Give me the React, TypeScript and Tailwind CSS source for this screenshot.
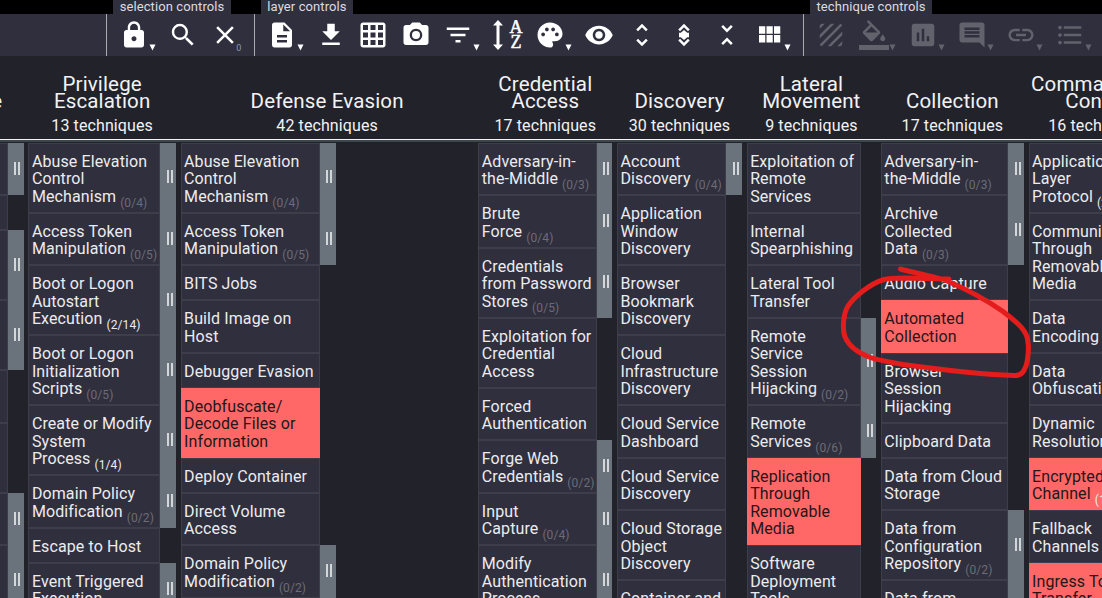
import React from "react";
import {
  MdLock,
  MdSearch,
  MdClose,
  MdDescription,
  MdDownload,
  MdGridOn,
  MdPhotoCamera,
  MdFilterList,
  MdPalette,
  MdVisibility,
  MdUnfoldMore,
  MdUnfoldLess,
  MdTexture,
  MdInsertLink,
  MdFormatListBulleted,
} from "react-icons/md";

type Technique = {
  lines: string[];
  count?: string;
  active?: boolean;
  red?: boolean;
};

type Tactic = {
  title: string[];
  total: string;
  width: string;
  cell: string;
  techniques: Technique[];
};

const t = (text: string, count?: string, extra?: Partial<Technique>): Technique => ({
  lines: text.split("|"),
  count,
  ...extra,
});

const tactics: Tactic[] = [
  {
    title: ["Persistence"],
    total: "19 techniques",
    width: "w-[152px]",
    cell: "w-[136.5px]",
    techniques: [
      t("Account|Manipulation", "(0/5)"),
      t("BITS Jobs"),
      t("Boot or Logon|Autostart|Execution", "(2/14)"),
      t("Boot or Logon|Initialization|Scripts", "(0/5)"),
      t("Browser|Extensions"),
      t("Compromise|Client Software|Binary"),
      t("Create|Account", "(0/3)"),
      t("Create or|Modify System|Process", "(1/4)"),
    ],
  },
  {
    title: ["Privilege", "Escalation"],
    total: "13 techniques",
    width: "w-[147.5px]",
    cell: "w-[132px]",
    techniques: [
      t("Abuse Elevation|Control|Mechanism", "(0/4)"),
      t("Access Token|Manipulation", "(0/5)"),
      t("Boot or Logon|Autostart|Execution", "(2/14)", { active: true }),
      t("Boot or Logon|Initialization|Scripts", "(0/5)"),
      t("Create or Modify|System|Process", "(1/4)", { active: true }),
      t("Domain Policy|Modification", "(0/2)"),
      t("Escape to Host"),
      t("Event Triggered|Execution", "(0/15)"),
    ],
  },
  {
    title: ["Defense Evasion"],
    total: "42 techniques",
    width: "w-[293px]",
    cell: "w-[139.5px]",
    techniques: [
      t("Abuse Elevation|Control|Mechanism", "(0/4)"),
      t("Access Token|Manipulation", "(0/5)"),
      t("BITS Jobs"),
      t("Build Image on|Host"),
      t("Debugger Evasion"),
      t("Deobfuscate/|Decode Files or|Information", undefined, { red: true }),
      t("Deploy Container"),
      t("Direct Volume|Access"),
      t("Domain Policy|Modification", "(0/2)"),
      t("Execution|Guardrails", "(0/1)"),
    ],
  },
  {
    title: ["Credential", "Access"],
    total: "17 techniques",
    width: "w-[134px]",
    cell: "w-[118.5px]",
    techniques: [
      t("Adversary-in-|the-Middle", "(0/3)"),
      t("Brute|Force", "(0/4)"),
      t("Credentials|from Password|Stores", "(0/5)"),
      t("Exploitation for|Credential|Access"),
      t("Forced|Authentication"),
      t("Forge Web|Credentials", "(0/2)"),
      t("Input|Capture", "(0/4)"),
      t("Modify|Authentication|Process", "(0/5)"),
    ],
  },
  {
    title: ["Discovery"],
    total: "30 techniques",
    width: "w-[125px]",
    cell: "w-[109.5px]",
    techniques: [
      t("Account|Discovery", "(0/4)"),
      t("Application|Window|Discovery"),
      t("Browser|Bookmark|Discovery"),
      t("Cloud|Infrastructure|Discovery"),
      t("Cloud Service|Dashboard"),
      t("Cloud Service|Discovery"),
      t("Cloud Storage|Object|Discovery"),
      t("Container and|Resource|Discovery"),
    ],
  },
  {
    title: ["Lateral", "Movement"],
    total: "9 techniques",
    width: "w-[129.5px]",
    cell: "w-[114px]",
    techniques: [
      t("Exploitation of|Remote|Services"),
      t("Internal|Spearphishing"),
      t("Lateral Tool|Transfer"),
      t("Remote|Service|Session|Hijacking", "(0/2)"),
      t("Remote|Services", "(0/6)"),
      t("Replication|Through|Removable|Media", undefined, { red: true }),
      t("Software|Deployment|Tools"),
    ],
  },
  {
    title: ["Collection"],
    total: "17 techniques",
    width: "w-[143px]",
    cell: "w-[127.5px]",
    techniques: [
      t("Adversary-in-|the-Middle", "(0/3)"),
      t("Archive|Collected|Data", "(0/3)"),
      t("Audio Capture"),
      t("Automated|Collection", undefined, { red: true }),
      t("Browser|Session|Hijacking"),
      t("Clipboard Data"),
      t("Data from Cloud|Storage"),
      t("Data from|Configuration|Repository", "(0/2)"),
      t("Data from|Information|Repositories", "(0/3)"),
    ],
  },
  {
    title: ["Command and", "Control"],
    total: "16 techniques",
    width: "w-[141px]",
    cell: "w-[125.5px]",
    techniques: [
      t("Application|Layer|Protocol", "(2/4)", { active: true }),
      t("Communication|Through|Removable|Media"),
      t("Data|Encoding", "(0/2)"),
      t("Data|Obfuscation", "(0/3)"),
      t("Dynamic|Resolution", "(0/3)"),
      t("Encrypted|Channel", "(1/2)", { red: true, active: true }),
      t("Fallback|Channels"),
      t("Ingress Tool|Transfer", undefined, { red: true }),
    ],
  },
];

const SortIcon = () => (
  <svg width="32" height="30" viewBox="0 0 32 30" fill="currentColor">
    <path d="M6 0l5 5.500H7.500v19H11L6 30l-5-5.500h3.500v-19H1z" />
    <g fontSize="18" fontFamily="Liberation Serif, serif" textAnchor="middle" stroke="currentColor" strokeWidth="0.500">
      <text x="24" y="12.500">
        A
      </text>
      <text x="24" y="28">
        Z
      </text>
    </g>
  </svg>
);

const Glyph = ({ d }: { d: string }) => (
  <svg width="30" height="30" viewBox="0 0 24 24" fill="currentColor">
    <path d={d} />
  </svg>
);

const EXPAND_ALL =
  "M12 5.830L15.170 9l1.410-1.410L12 3 7.410 7.590 8.830 9zM12 18.170L8.830 15l-1.410 1.410L12 21l4.590-4.590L15.170 15zM12 8l2.600 2.200H16v3.600h-1.400L12 16l-2.600-2.200H8v-3.600h1.400z";
const MODULE = "M4 11h5V5H4v6zm0 7h5v-6H4v6zm6 0h5v-6h-5v6zm6 0h5v-6h-5v6zm-6-7h5V5h-5v6zm6-6v6h5V5h-5z";
const FILL =
  "M16.560 8.940L7.620 0 6.210 1.410l2.380 2.380-5.150 5.150c-.59.59-.59 1.540 0 2.120l5.500 5.500c.29.29.68.44 1.060.44s.77-.15 1.060-.44l5.500-5.500c.59-.58.59-1.530 0-2.120zM5.210 10L10 5.210 14.790 10H5.210zM19 11.500s-2 2.170-2 3.500c0 1.100.9 2 2 2s2-.9 2-2c0-1.330-2-3.500-2-3.500zM0 20h24v4H0z";
const CHART =
  "M19 3H5c-1.100 0-2 .9-2 2v14c0 1.100.9 2 2 2h14c1.100 0 2-.9 2-2V5c0-1.100-.9-2-2-2zM9 17H7v-7h2v7zm4 0h-2V7h2v10zm4 0h-2v-4h2v4z";
const COMMENT =
  "M21.990 4c0-1.100-.89-2-1.990-2H4c-1.100 0-2 .9-2 2v12c0 1.100.9 2 2 2h14l4 4-.01-18zM18 14H6v-2h12v2zm0-3H6V9h12v2zm0-3H6V6h12v2z";

const Tool = ({
  children,
  caret,
  badge,
}: {
  children: React.ReactNode;
  caret?: boolean;
  badge?: string;
}) => (
  <div className={`flex h-[42px] shrink-0 ${caret ? "w-[49px]" : "w-[42.55px]"}`}>
    <div className="flex h-[30px] shrink-0 pt-[6.5px]">{children}</div>
    {caret && (
      <svg className="mt-[30.5px]" width="7" height="7" viewBox="0 0 7 7" fill="currentColor">
        <path d="M0.500 0.500h6L3.500 6.500z" />
      </svg>
    )}
    {badge && <span className="-ml-[4px] mt-[29px] text-[9px] leading-[11px] text-[#8a9bb0]">{badge}</span>}
  </div>
);

const Section = ({
  label,
  width,
  labelWidth,
  disabled,
  children,
}: {
  label: string;
  width: string;
  labelWidth: string;
  disabled?: boolean;
  children: React.ReactNode;
}) => (
  <div className={`shrink-0 ${width}`}>
    <div className="h-[13.5px] bg-black pl-[7px]">
      <div
        className={`h-[14px] bg-[#302f3e] text-center text-[13px] leading-[14px] tracking-[0.1px] whitespace-nowrap text-[#dcdce0] ${labelWidth}`}
      >
        {label}
      </div>
    </div>
    <div
      className={`flex h-[42.5px] border-l-[1.5px] border-[#a9a9b0] bg-[#302f3e] ${
        disabled ? "pl-[12.2px] text-[#62626d]" : "pl-[11.8px] text-white"
      }`}
    >
      {children}
    </div>
  </div>
);

const Toolbar = () => (
  <div className="flex h-[56px] w-[1200px]">
    <div className="w-[106px] shrink-0">
      <div className="h-[13.5px] bg-black" />
      <div className="h-[42.5px] bg-[#302f3e]" />
    </div>
    <Section label="selection controls" width="w-[148px]" labelWidth="w-[118px]">
      <Tool caret><MdLock size={30} /></Tool>
      <Tool><MdSearch size={30} /></Tool>
      <Tool badge="0"><MdClose size={30} /></Tool>
    </Section>
    <Section label="layer controls" width="w-[549px]" labelWidth="w-[92px]">
      <Tool caret><MdDescription size={30} /></Tool>
      <Tool><MdDownload size={30} /></Tool>
      <Tool><MdGridOn size={30} /></Tool>
      <Tool><MdPhotoCamera size={30} /></Tool>
      <Tool caret><MdFilterList size={30} /></Tool>
      <Tool><SortIcon /></Tool>
      <Tool caret><MdPalette size={30} /></Tool>
      <Tool><MdVisibility size={30} /></Tool>
      <Tool><MdUnfoldMore size={30} /></Tool>
      <Tool><Glyph d={EXPAND_ALL} /></Tool>
      <Tool><MdUnfoldLess size={30} /></Tool>
      <Tool caret><Glyph d={MODULE} /></Tool>
    </Section>
    <Section label="technique controls" width="w-[397px]" labelWidth="w-[122px]" disabled>
      <Tool><MdTexture size={30} /></Tool>
      <Tool caret><Glyph d={FILL} /></Tool>
      <Tool caret><Glyph d={CHART} /></Tool>
      <Tool caret><Glyph d={COMMENT} /></Tool>
      <Tool caret><MdInsertLink size={30} /></Tool>
      <Tool caret><MdFormatListBulleted size={30} /></Tool>
    </Section>
  </div>
);

const TechniqueRow = ({ item, cell }: { item: Technique; cell: string }) => (
  <div className="flex">
    <div
      className={`shrink-0 border pt-[9px] pb-[6.5px] pl-[2.5px] whitespace-nowrap ${cell} ${
        item.red ? "border-[#ff6866] bg-[#ff6866] text-[#26161a]" : "border-[#3e3e4a] bg-[#302f3e] text-[#ececee]"
      }`}
    >
      {item.lines.map((line, i) => (
        <div key={i} className="h-[17.5px] text-[16px] leading-[17.5px] tracking-[0.1px]">
          {line}
          {item.count && i === item.lines.length - 1 && (
            <span
              className={`relative top-[5px] ml-[4px] text-[12px] leading-none ${
                item.active ? "text-[#ececee]" : "text-[#6c6c75]"
              }`}
            >
              {item.count}
            </span>
          )}
        </div>
      ))}
    </div>
    {item.count && (
      <div className="flex w-[15.5px] shrink-0 items-center justify-center gap-[2px] bg-[#6a737b] pb-[1.5px] pl-[3px]">
        <span className="h-[13px] w-[2px] bg-[#d4d7da]" />
        <span className="h-[13px] w-[2px] bg-[#d4d7da]" />
      </div>
    )}
  </div>
);

const TacticHeader = ({ tactic }: { tactic: Tactic }) => (
  <div className={`flex shrink-0 flex-col justify-end text-center whitespace-nowrap text-[#f2f2f4] ${tactic.width}`}>
    {tactic.title.map((line) => (
      <div key={line} className="text-[20.5px] leading-[17.5px] tracking-[0.15px]">
        {line}
      </div>
    ))}
    <div className="mt-[4px] pb-[2.5px] text-[16px] leading-[21px] tracking-[0.1px]">{tactic.total}</div>
  </div>
);

const Scribble = () => (
  <svg className="absolute top-[256px] left-[836px]" width="204" height="130" viewBox="836 256 204 130" fill="none">
    <path
      d="M949 279L905 278C895 278 889 278 884 279.500C869 284 853 298 848 306C843 314 842 331 845.500 338C850 348 859 353 869 357C880 361 891 362 903 364.500C940 369.500 980 374.500 1014 375.500C1022 376 1024 371 1026 366C1028 360 1029 347 1028 343C1028 331 1018 323 1003 311.500C988 301 966 289 946 280.500C932 276 915 273 900.500 269"
      stroke="#e51c1c"
      strokeWidth="5"
      strokeLinecap="round"
      strokeLinejoin="round"
    />
  </svg>
);

const App = () => {
  return (
    <div className="relative h-[598px] w-[1102px] overflow-hidden bg-[#22222b] font-['Roboto',sans-serif]">
      <Toolbar />
      <div className="-ml-[128.3px] flex h-[82px] w-[1400px] gap-[4.7px]">
        {tactics.map((tactic) => (
          <TacticHeader key={tactic.total + tactic.title[0]} tactic={tactic} />
        ))}
      </div>
      <div className="h-[4.5px] pt-px">
        <div className="h-[3px] border-b-2 border-[#3d464c] bg-[#f4f4f4]" />
      </div>
      <div className="-ml-[128.3px] flex w-[1400px] items-start gap-[4.7px]">
        {tactics.map((tactic) => (
          <div key={tactic.total + tactic.title[0]} className={`shrink-0 ${tactic.width}`}>
            {tactic.techniques.map((item, i) => (
              <TechniqueRow key={i} item={item} cell={tactic.cell} />
            ))}
          </div>
        ))}
      </div>
      <Scribble />
    </div>
  );
};

export default App;
